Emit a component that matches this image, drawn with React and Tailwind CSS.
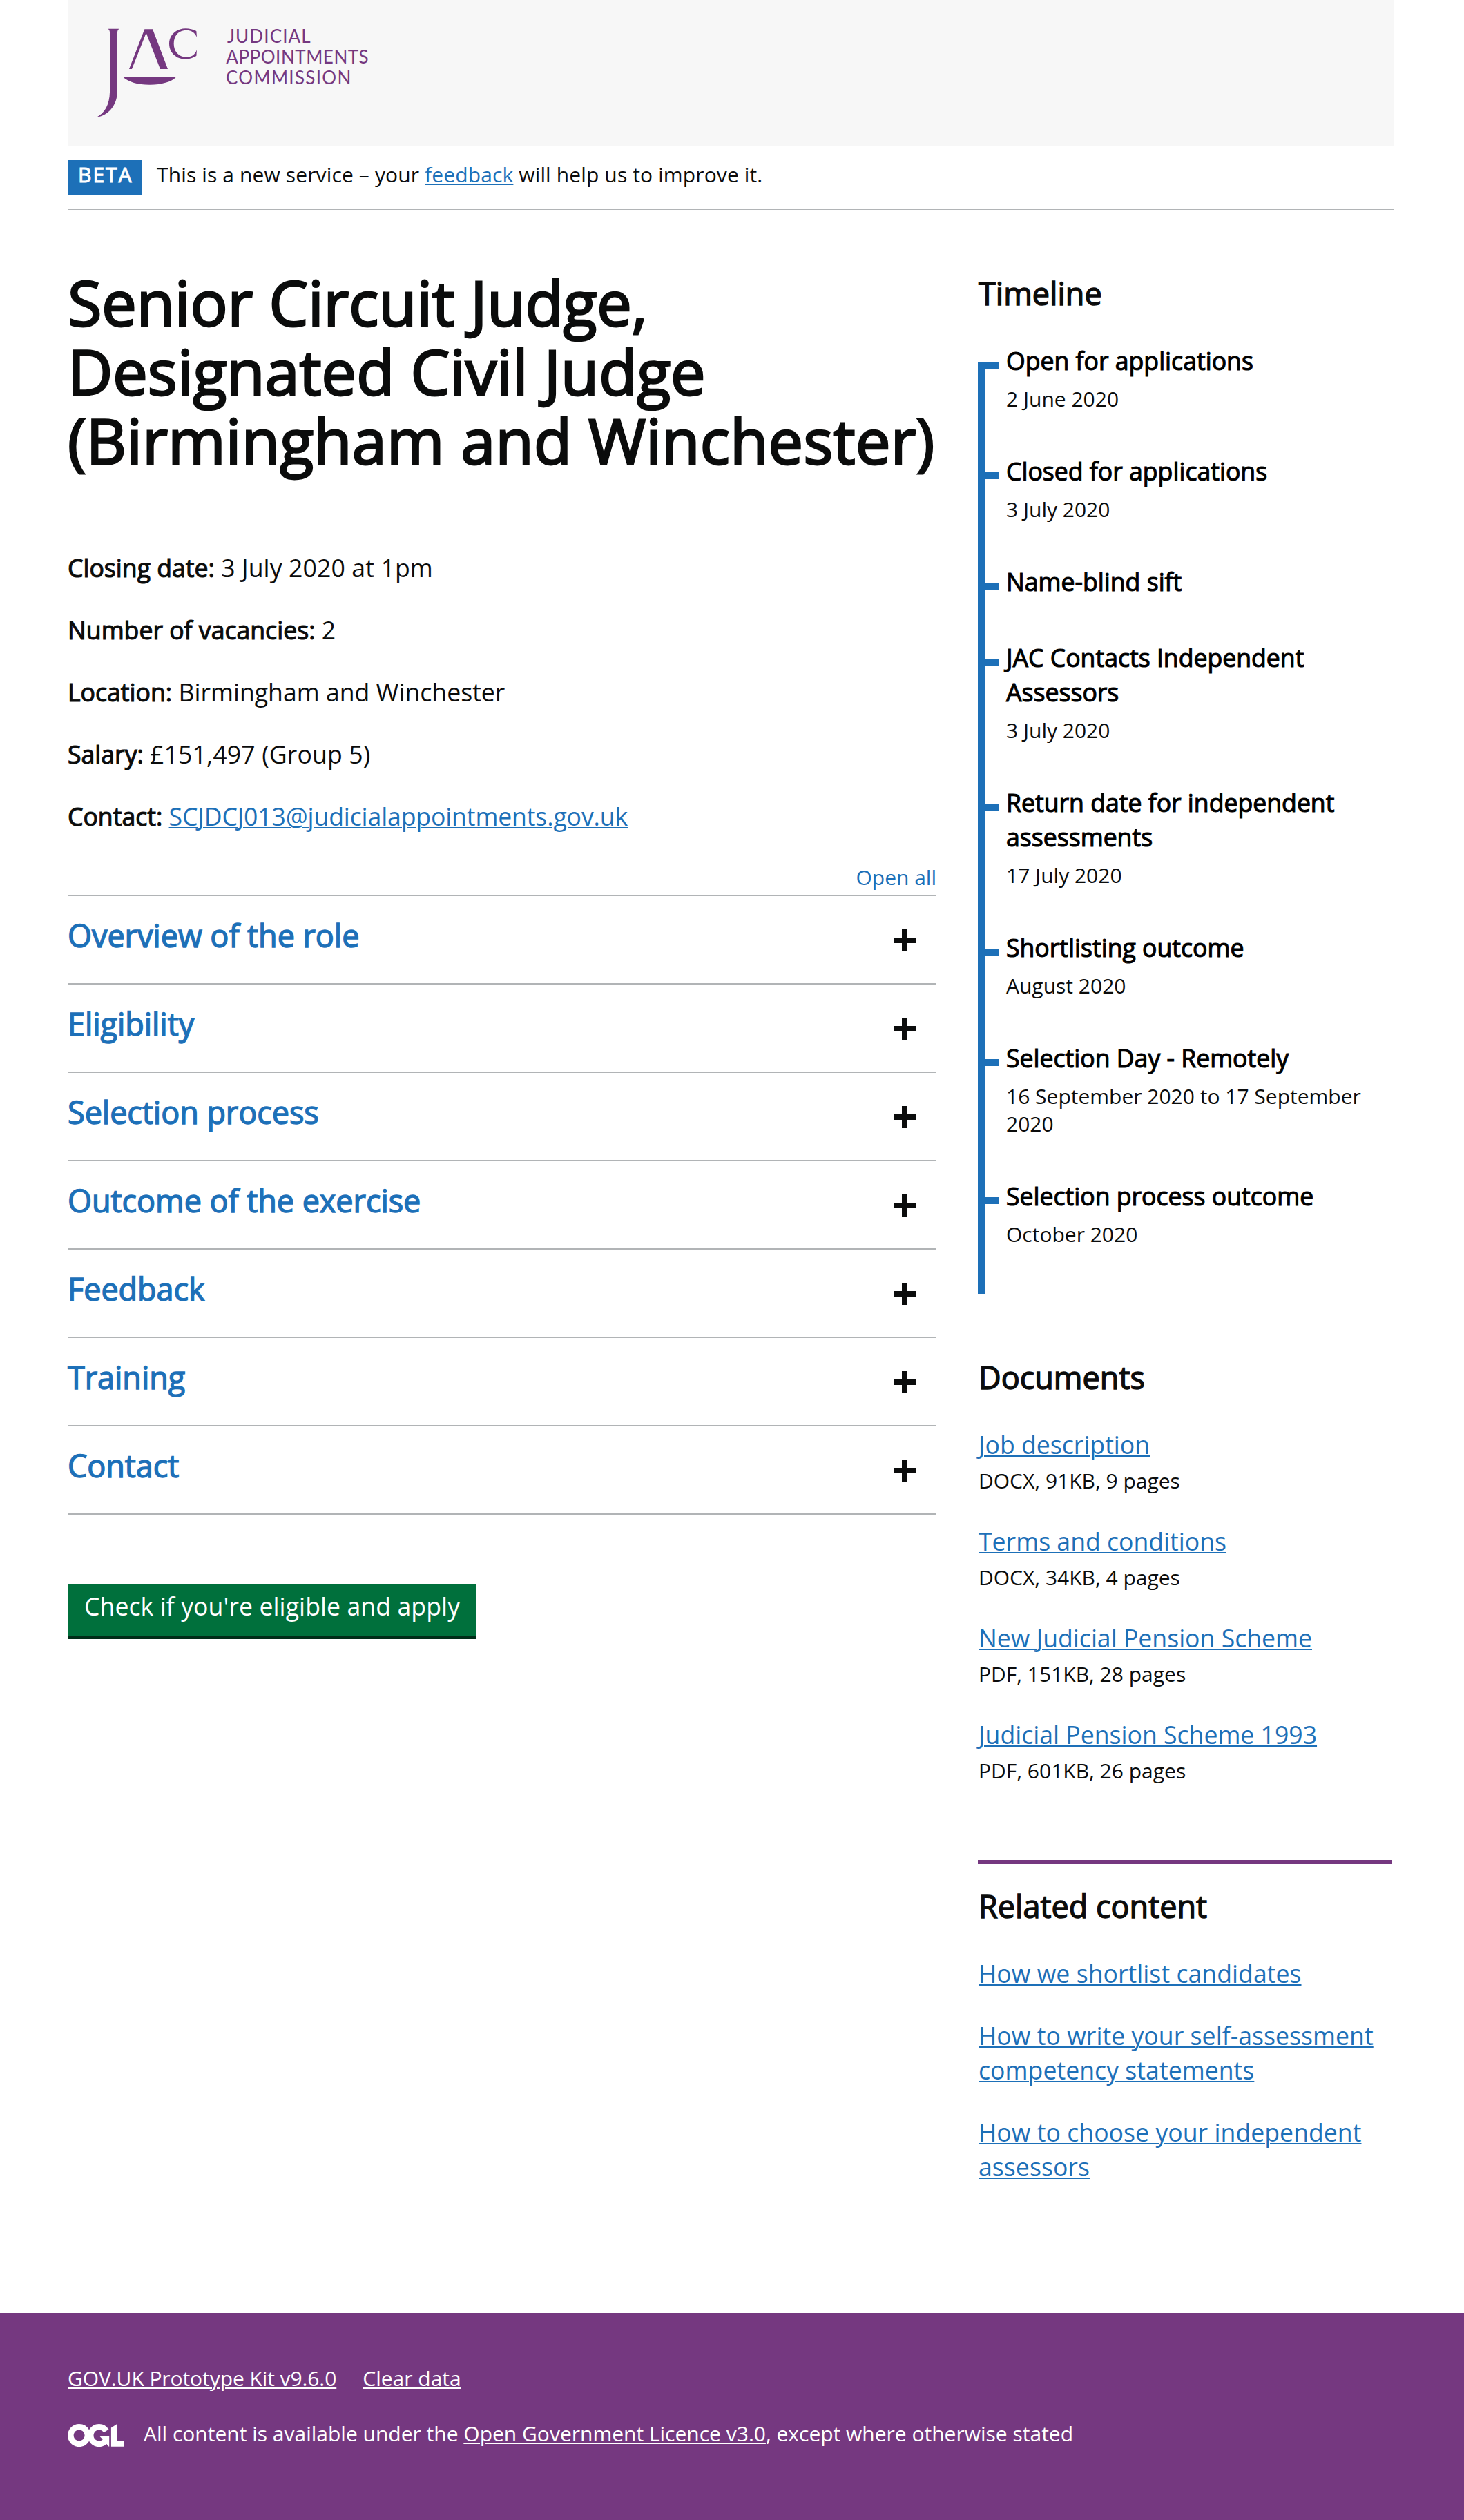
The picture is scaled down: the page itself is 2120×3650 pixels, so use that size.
import React from "react";

const timeline = [
  { title: "Open for applications", date: "2 June 2020" },
  { title: "Closed for applications", date: "3 July 2020" },
  { title: "Name-blind sift" },
  { title: "JAC Contacts Independent Assessors", date: "3 July 2020" },
  { title: "Return date for independent assessments", date: "17 July 2020" },
  { title: "Shortlisting outcome", date: "August 2020" },
  { title: "Selection Day - Remotely", date: "16 September 2020 to 17 September 2020" },
  { title: "Selection process outcome", date: "October 2020" },
];

const documents = [
  { name: "Job description", meta: "DOCX, 91KB, 9 pages" },
  { name: "Terms and conditions", meta: "DOCX, 34KB, 4 pages" },
  { name: "New Judicial Pension Scheme", meta: "PDF, 151KB, 28 pages" },
  { name: "Judicial Pension Scheme 1993", meta: "PDF, 601KB, 26 pages" },
];

const related = [
  "How we shortlist candidates",
  "How to write your self-assessment competency statements",
  "How to choose your independent assessors",
];

const sections = [
  "Overview of the role",
  "Eligibility",
  "Selection process",
  "Outcome of the exercise",
  "Feedback",
  "Training",
  "Contact",
];

function Link({ children, className = "text-[#1d70b8]" }) {
  return (
    <a href="#" className={`underline decoration-2 underline-offset-2 ${className}`}>
      {children}
    </a>
  );
}

function Fact({ label, children }) {
  return (
    <p>
      <span className="[-webkit-text-stroke:1.1px]">{label}:</span> {children}
    </p>
  );
}

function SideHeading({ children }) {
  return <h2 className="pt-px pl-px text-[45px] leading-[60px] [-webkit-text-stroke:1.4px]">{children}</h2>;
}

function JacLogo() {
  return (
    <svg width="502" height="212" viewBox="54 0 1506 636" fill="#753880" role="img" aria-label="Judicial Appointments Commission">
      <path d="M229 125H278C272 129 270 134 270 142V398C268 455 235 500 179 510C215 492 236 455 237 400V142C237 134 235 129 229 125Z" />
      <path d="M388 127L321 300H333L395 143L456 300H489L423 127Z" />
      <path d="M293 333H527C505 358 455 369 408 368C360 368 318 358 293 333Z" />
      <path d="M613 135C598 128 583 124 567 124C524 124 495 153 495 190C495 228 524 257 567 257C584 257 600 251 613 243L615 215C608 238 592 248 570 248C536 248 515 224 515 190C515 155 536 131 570 131C592 131 606 142 615 161Z" />
      <g fontFamily="Lato, sans-serif" fontSize="78">
        <text x="747" y="185" textLength="362">JUDICIAL</text>
        <text x="742" y="275" textLength="619">APPOINTMENTS</text>
        <text x="741" y="367" textLength="544">COMMISSION</text>
      </g>
    </svg>
  );
}

function OglLogo() {
  return (
    <svg width="82" height="33.2" viewBox="0 0 483.2 195.7" fill="white" className="mt-[6px] shrink-0" aria-label="OGL">
      <path d="M421.5 142.8V.1l-50.7 32.3v161.1h112.4v-50.7zm-122.3-9.6A47.12 47.12 0 0 1 221 97.8c0-26 21.1-47.1 47.1-47.1 16.7 0 31.4 8.7 39.7 21.8l42.7-27.2A97.63 97.63 0 0 0 268.1 0c-36.5 0-68.3 20.1-85.1 49.7A98 98 0 0 0 97.8 0C43.9 0 0 43.9 0 97.8s43.9 97.8 97.8 97.8c36.5 0 68.3-20.1 85.1-49.7a97.76 97.76 0 0 0 149.6 25.4l19.4 22.2h3v-87.8h-80l24.3 27.5zM97.8 145c-26 0-47.1-21.1-47.1-47.1s21.1-47.1 47.1-47.1 47.1 21.1 47.1 47.1S123.8 145 97.8 145" />
    </svg>
  );
}

export default function App() {
  return (
    <div className="w-[2120px] bg-white font-['Open_Sans',sans-serif] text-[35.625px] leading-[50px] text-[#0b0c0c] antialiased">
      <div className="ml-[98px] w-[1920px]">
        <header className="h-[212px] bg-[#f7f7f7]">
          <JacLogo />
        </header>
        <div className="flex h-[92px] items-start border-b-2 border-[#b1b4b6] pt-5 text-[30px] leading-10">
          <strong className="h-[50px] w-[108px] bg-[#1d70b8] pt-px pl-[15px] font-normal tracking-[2px] text-white [-webkit-text-stroke:1px]">
            BETA
          </strong>
          <p className="ml-[21px] pt-px tracking-[0.13px]">
            This is a new service – your <Link>feedback</Link> will help us to improve it.
          </p>
        </div>
      </div>

      <main className="ml-[98px] flex h-[3046px] w-[1918px] justify-between">
        <div className="w-[1258px]">
          <h1 className="mt-[83px] text-[90px] leading-[100px] [-webkit-text-stroke:2.8px]">
            <span className="block tracking-[-0.1px]">Senior Circuit Judge,</span>
            <span className="block">Designated Civil Judge</span>
            <span className="block tracking-[0.26px]">(Birmingham and Winchester)</span>
          </h1>

          <div className="mt-[110px] flex flex-col gap-10">
            <Fact label="Closing date">
              <span className="tracking-[0.12px]">3 July 2020 at 1pm</span>
            </Fact>
            <Fact label="Number of vacancies">2</Fact>
            <Fact label="Location">Birmingham and Winchester</Fact>
            <Fact label="Salary">
              <span className="tracking-[0.12px]">£151,497 (Group 5)</span>
            </Fact>
            <Fact label="Contact">
              <Link className="tracking-[-0.13px] text-[#1d70b8]">SCJDCJ013@judicialappointments.gov.uk</Link>
            </Fact>
          </div>

          <div className="mt-11 flex h-[45px] items-start justify-end text-[30px] leading-10 text-[#1d70b8]">
            <button type="button">Open all</button>
          </div>
          <div className="border-b-2 border-[#b1b4b6]">
            {sections.map((s) => (
              <div key={s} className="flex h-32 justify-between border-t-2 border-[#b1b4b6] pt-[27px] pr-[30px]">
                <h2 className="text-[45px] leading-[60px] tracking-[-0.05px] text-[#1d70b8] [-webkit-text-stroke:1.4px]">{s}</h2>
                <svg width="32" height="32" viewBox="0 0 32 32" fill="#0b0c0c" className="mt-[21px]">
                  <path d="M12 0h8v12h12v8H20v12h-8V20H0v-8h12z" />
                </svg>
              </div>
            ))}
          </div>

          <button
            type="button"
            className="mt-[100px] block h-[76px] w-[592px] bg-[#00703c] pb-3 text-center tracking-[0.08px] text-white shadow-[0_4px_0_#002d18]"
          >
            Check if you're eligible and apply
          </button>
        </div>

        <aside className="w-[600px]">
          <div className="mt-[90px]">
            <SideHeading>Timeline</SideHeading>
          </div>
          <ul className="relative mt-[42px] pb-[7px]">
            <li aria-hidden="true" className="absolute top-[27px] bottom-0 left-0 w-[10px] bg-[#1d70b8]" />
            {timeline.map((t) => (
              <li key={t.title} className="flex">
                <span className="mt-[27px] h-[10px] w-[30px] shrink-0 bg-[#1d70b8]" />
                <div className="ml-[11px] pb-[59px]">
                  <h3 className="text-black [-webkit-text-stroke:1.1px]">{t.title}</h3>
                  {t.date ? (
                    <p className="mt-[11px] text-[30px] leading-10">{t.date}</p>
                  ) : (
                    <div className="h-px" />
                  )}
                </div>
              </li>
            ))}
          </ul>

          <div className="mt-[90px]">
            <SideHeading>Documents</SideHeading>
          </div>
          <ul className="mt-[42px] pl-px">
            {documents.map((d) => (
              <li key={d.name} className="h-[140px]">
                <Link>{d.name}</Link>
                <p className="mt-2 text-[30px] leading-10">{d.meta}</p>
              </li>
            ))}
          </ul>

          <div className="mt-[67px] border-t-[6px] border-[#753880] pt-[30px]">
            <SideHeading>Related content</SideHeading>
            <ul className="mt-[42px] flex flex-col gap-10 pl-px tracking-[0.04px]">
              {related.map((r) => (
                <li key={r}>
                  <Link>{r}</Link>
                </li>
              ))}
            </ul>
          </div>
        </aside>
      </main>

      <footer className="h-[300px] bg-[#753880] pt-[75px] pl-[98px] text-[30px] leading-10 text-white">
        <div className="flex gap-[38px]">
          <Link className="tracking-[-0.08px] text-white">GOV.UK Prototype Kit v9.6.0</Link>
          <Link className="text-white">Clear data</Link>
        </div>
        <div className="mt-10 flex">
          <OglLogo />
          <p className="ml-7">
            All content is available under the <Link className="text-white">Open Government Licence v3.0</Link>, except
            where otherwise stated
          </p>
        </div>
      </footer>
    </div>
  );
}
